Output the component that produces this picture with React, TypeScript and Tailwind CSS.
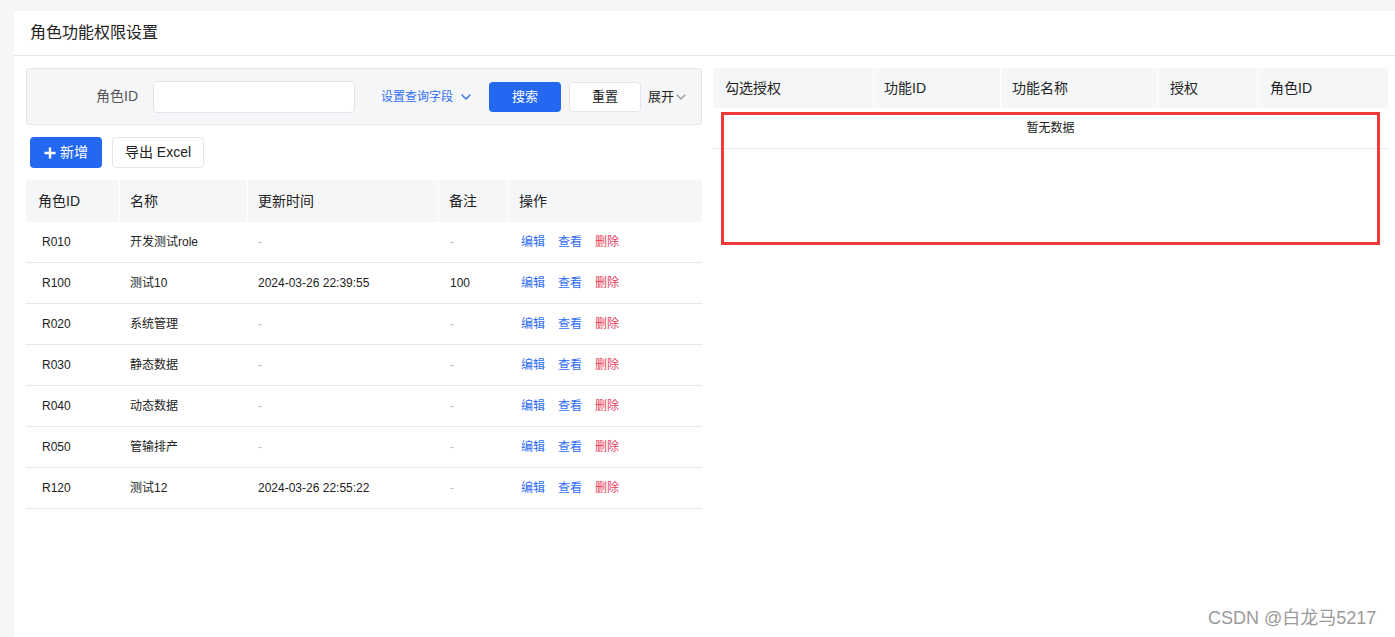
import React from "react";

const font = { fontFamily: '"Liberation Sans", Arial, "Noto Sans CJK SC", sans-serif' };

const rows = [
  { id: "R010", name: "开发测试role", time: "-", note: "-" },
  { id: "R100", name: "测试10", time: "2024-03-26 22:39:55", note: "100" },
  { id: "R020", name: "系统管理", time: "-", note: "-" },
  { id: "R030", name: "静态数据", time: "-", note: "-" },
  { id: "R040", name: "动态数据", time: "-", note: "-" },
  { id: "R050", name: "管输排产", time: "-", note: "-" },
  { id: "R120", name: "测试12", time: "2024-03-26 22:55:22", note: "-" },
];

function Chevron({ className }: { className?: string }) {
  return (
    <svg width="12" height="12" viewBox="0 0 12 12" className={className} fill="none">
      <path d="M2 4l4 4 4-4" stroke="currentColor" strokeWidth="1.3" strokeLinecap="round" strokeLinejoin="round" />
    </svg>
  );
}

function Cell({ v }: { v: string }) {
  return v === "-" ? <span className="text-[#b5b9c0]">-</span> : <span>{v}</span>;
}

export default function App() {
  return (
    <div style={font} className="w-[1395px] h-[637px] bg-[#f5f6f8] pt-[11px] pl-[14px] overflow-hidden relative text-[#222]">
      <div className="bg-white h-full flex flex-col">
        <div className="h-[45px] border-b border-[#e6e7ea] flex items-center pl-[16px] text-[16px] text-[#222]">
          角色功能权限设置
        </div>
        <div className="flex gap-[11px] pl-[12px] pr-[7px] pt-[12px]">
          {/* Left panel */}
          <div className="w-[676px] flex flex-col">
            <div className="h-[57px] bg-[#f5f6f8] border border-[#e3e5e8] rounded-[3px] flex items-center">
              <span className="w-[111px] text-right text-[14px] text-[#555]">角色ID</span>
              <div className="ml-[15px] w-[202px] h-[32px] bg-white border border-[#e3e5e8] rounded-[4px]" />
              <span className="ml-[26px] text-[12px] text-[#2f6df5] flex items-center">
                设置查询字段
                <Chevron className="ml-[7px] text-[#2f6df5]" />
              </span>
              <button className="ml-[17px] w-[72px] h-[30px] bg-[#2468f2] text-white text-[13px] rounded-[4px]">搜索</button>
              <button className="ml-[8px] w-[72px] h-[30px] bg-white border border-[#e3e5e8] text-[13px] text-[#222] rounded-[4px]">重置</button>
              <span className="ml-[7px] text-[13px] text-[#222] flex items-center">
                展开
                <Chevron className="ml-[1px] text-[#999]" />
              </span>
            </div>
            <div className="flex gap-[10px] mt-[12px] pl-[4px]">
              <button className="w-[72px] h-[31px] bg-[#2468f2] text-white text-[14px] rounded-[4px] flex items-center justify-center gap-[4px]">
                <svg width="12" height="12" viewBox="0 0 12 12"><path d="M6 0.5v11M0.5 6h11" stroke="white" strokeWidth="2.4" /></svg>
                新增
              </button>
              <button className="w-[92px] h-[31px] bg-white border border-[#e3e5e8] text-[14px] text-[#222] rounded-[4px]">导出 Excel</button>
            </div>
            <div className="mt-[12px] text-[12px]">
              <div className="grid grid-cols-[94px_128px_191px_70px_193px] h-[42px] bg-[#f5f6f8] text-[14px] text-[#222] rounded-t-[3px]">
                <div className="flex items-center pl-[12px] border-r border-white">角色ID</div>
                <div className="flex items-center pl-[10px] border-r border-white">名称</div>
                <div className="flex items-center pl-[10px] border-r border-white">更新时间</div>
                <div className="flex items-center pl-[10px] border-r border-white">备注</div>
                <div className="flex items-center pl-[10px]">操作</div>
              </div>
              {rows.map((r) => (
                <div key={r.id} className="grid grid-cols-[94px_128px_191px_70px_193px] h-[41px] border-b border-[#e8e9ec] items-center">
                  <div className="pl-[16px]">{r.id}</div>
                  <div className="pl-[10px]">{r.name}</div>
                  <div className="pl-[10px]"><Cell v={r.time} /></div>
                  <div className="pl-[11px]"><Cell v={r.note} /></div>
                  <div className="pl-[12px] flex gap-[13px]">
                    <span className="text-[#2f6df5]">编辑</span>
                    <span className="text-[#2f6df5]">查看</span>
                    <span className="text-[#e83a5a]">删除</span>
                  </div>
                </div>
              ))}
            </div>
          </div>
          {/* Right panel */}
          <div className="w-[675px] flex flex-col">
            <div className="grid grid-cols-[161px_127px_157px_100px_130px] h-[40px] bg-[#f5f6f8] text-[14px] text-[#222]">
              <div className="flex items-center pl-[12px] border-r border-white">勾选授权</div>
              <div className="flex items-center pl-[10px] border-r border-white">功能ID</div>
              <div className="flex items-center pl-[11px] border-r border-white">功能名称</div>
              <div className="flex items-center pl-[12px] border-r border-white">授权</div>
              <div className="flex items-center pl-[12px]">角色ID</div>
            </div>
            <div className="h-[41px] border-b border-[#e8e9ec] flex items-center justify-center text-[12px] text-[#222]">
              暂无数据
            </div>
          </div>
        </div>
      </div>
      <div className="absolute left-[721px] top-[112px] w-[659px] h-[133px] border-[3px] border-[#f03a3a]" />
      <div className="absolute left-[1208px] top-[608px] text-[18px] leading-[20px] text-[#9a9a9a]">CSDN @白龙马5217</div>
    </div>
  );
}
